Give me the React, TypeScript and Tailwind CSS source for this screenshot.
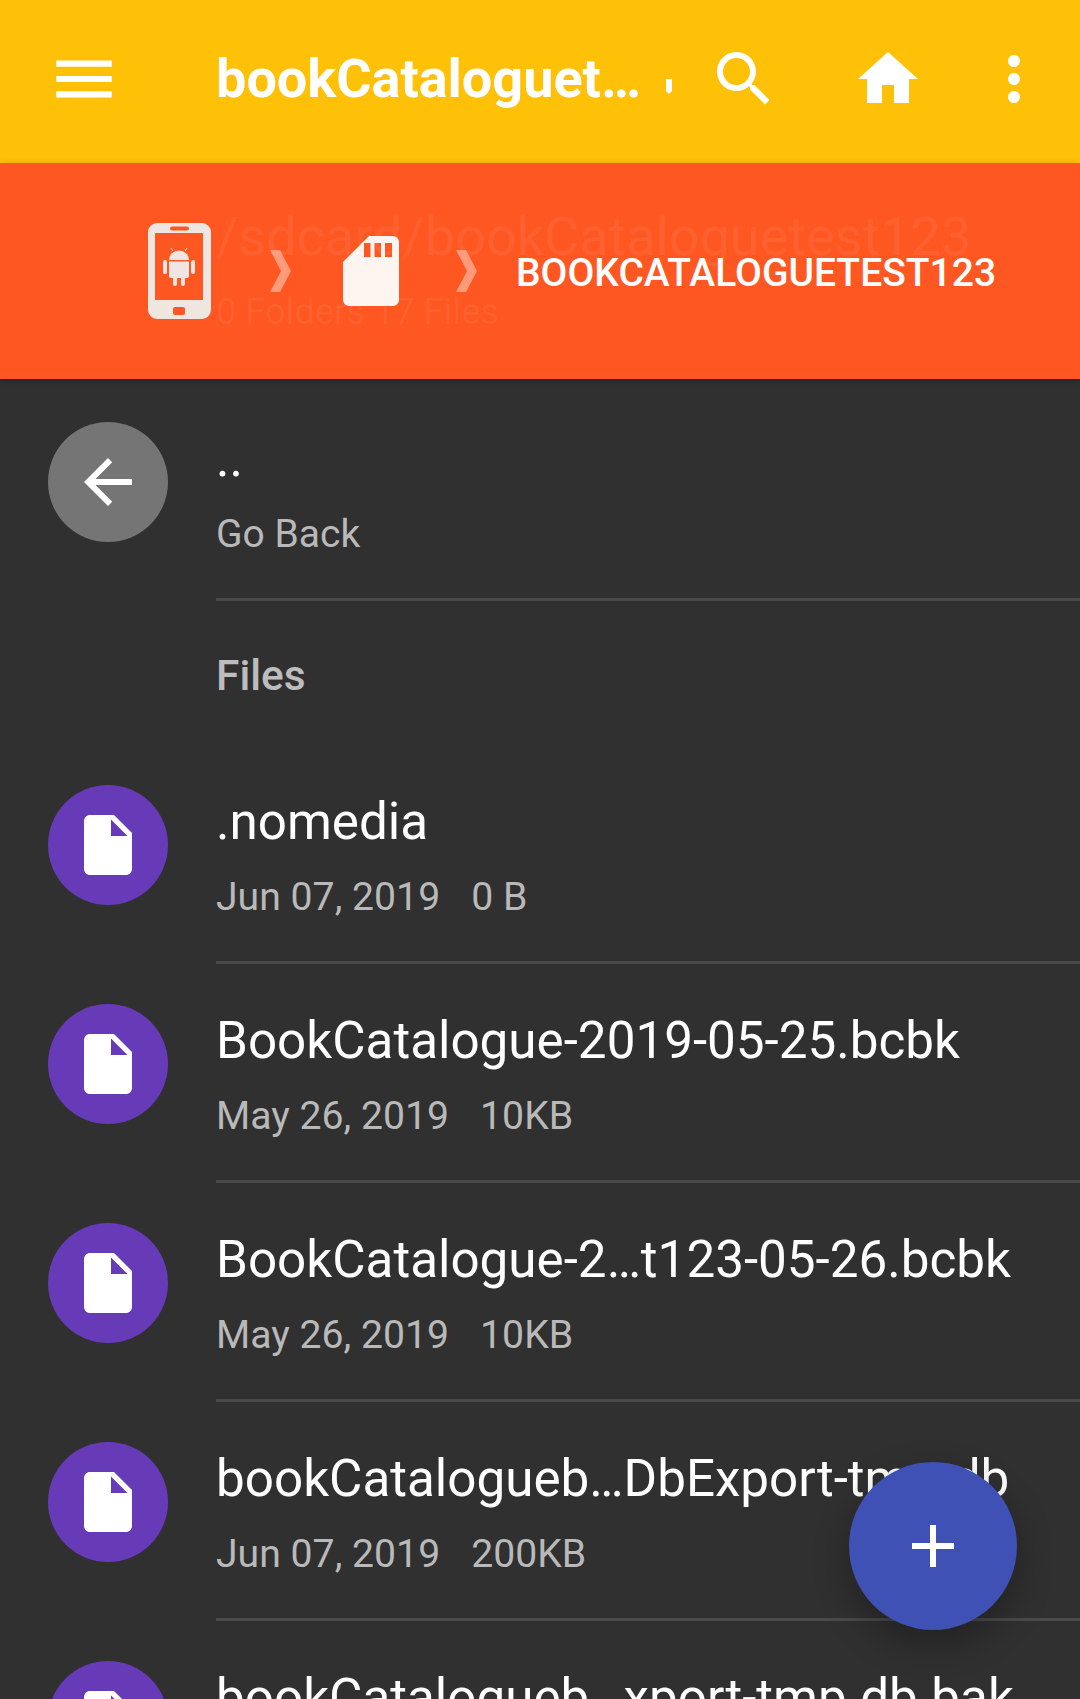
const files = [
  { name: '.nomedia', date: 'Jun 07, 2019', size: '0 B' },
  { name: 'BookCatalogue-2019-05-25.bcbk', date: 'May 26, 2019', size: '10KB' },
  { name: 'BookCatalogue-2…t123-05-26.bcbk', date: 'May 26, 2019', size: '10KB' },
  { name: 'bookCatalogueb…DbExport-tmp.db', date: 'Jun 07, 2019', size: '200KB' },
  { name: 'bookCatalogueb…xport-tmp.db.bak', date: 'Jun 07, 2019', size: '200KB' },
]

function Icon({ d, className }: { d: string; className: string }) {
  return (
    <svg viewBox="0 0 24 24" className={className} fill="currentColor">
      <path d={d} />
    </svg>
  )
}

function PhoneIcon() {
  return (
    <svg viewBox="0 0 63 96" className="w-[63px] h-[96px] shrink-0 text-[#efe6e2]" fill="currentColor">
      <path
        fillRule="evenodd"
        d="M9 0h45a9 9 0 0 1 9 9v78a9 9 0 0 1-9 9H9a9 9 0 0 1-9-9V9a9 9 0 0 1 9-9zM7 10v67h48V10H7zM24 3.500a2 2 0 0 0 0 4h15a2 2 0 0 0 0-4H24zM27 84a2 2 0 0 0-2 2v4a2 2 0 0 0 2 2h8a2 2 0 0 0 2-2v-4a2 2 0 0 0-2-2h-8z"
      />
      <path d="M21 37a10 9.500 0 0 1 20 0zM21 38.500h20V53a2 2 0 0 1-2 2H23a2 2 0 0 1-2-2zM15 39a2 2 0 0 1 4 0v10a2 2 0 0 1-4 0zM43 39a2 2 0 0 1 4 0v10a2 2 0 0 1-4 0zM25 55h4v6a2 2 0 0 1-4 0zM33 55h4v6a2 2 0 0 1-4 0z" />
      <path d="M25 28l-2-3M37 28l2-3" stroke="currentColor" strokeWidth="1" />
    </svg>
  )
}

function SdIcon() {
  return (
    <svg viewBox="0 0 56 70" className="w-[56px] h-[70px] shrink-0 text-[#fff5f0]" fill="currentColor">
      <path
        fillRule="evenodd"
        d="M26 0h24a6 6 0 0 1 6 6v58a6 6 0 0 1-6 6H6a6 6 0 0 1-6-6V26zM21 7v14h6.500V7zM31.500 7v14H38V7zM42 7v14h7V7z"
      />
    </svg>
  )
}

function Chevron() {
  return (
    <svg viewBox="0 0 21 42" className="w-[21px] h-[42px] shrink-0 text-white/40" fill="currentColor">
      <path d="M0 0h10l11 21-11 21H0l11-21z" />
    </svg>
  )
}

function RowText({ title, children }: { title: string; children: React.ReactNode }) {
  return (
    <div className="flex-1 min-w-0 border-b-[3px] border-[#4a4a4a]">
      <div className="text-[51.200px] leading-[60px] mt-[7px] text-white whitespace-nowrap">{title}</div>
      {children}
    </div>
  )
}

export default function App() {
  return (
    <div className="relative w-[1080px] h-[1699px] overflow-hidden bg-[#303030] font-['Roboto',sans-serif]">
      {/* Toolbar */}
      <div className="h-[163px] bg-[#ffc107] flex items-start pt-[43px] text-white">
        <Icon d="M3 18h18v-2H3v2zm0-5h18v-2H3v2zm0-7v2h18V6H3z" className="w-[74px] h-[74px] ml-[47px] -mt-[1px] shrink-0" />
        <div className="ml-[95px] w-[432px] shrink-0 text-[54px] leading-[72px] font-bold whitespace-nowrap">bookCataloguet…</div>
        <div className="w-[6px] h-[15px] mt-[36px] ml-[18px] shrink-0 bg-white [clip-path:polygon(0_0,100%_0,100%_80%,50%_100%,0_80%)]" />
        <Icon d="M15.500 14h-.79l-.28-.27C15.410 12.590 16 11.110 16 9.500 16 5.910 13.090 3 9.500 3S3 5.910 3 9.500 5.910 16 9.500 16c1.610 0 3.090-.59 4.230-1.570l.27.28v.79l5 4.990L20.490 19l-4.990-5zm-6 0C7.010 14 5 11.990 5 9.500S7.010 5 9.500 5 14 7.010 14 9.500 11.990 14 9.500 14z" className="w-[72px] h-[72px] ml-[36px] shrink-0" />
        <Icon d="M10 20v-6h4v6h5v-8h3L12 3 2 12h3v8z" className="w-[72px] h-[72px] ml-[72px] shrink-0" />
        <Icon d="M12 8c1.100 0 2-.9 2-2s-.9-2-2-2-2 .9-2 2 .9 2 2 2zm0 2c-1.100 0-2 .9-2 2s.9 2 2 2 2-.9 2-2-.9-2-2-2zm0 6c-1.100 0-2 .9-2 2s.9 2 2 2 2-.9 2-2-.9-2-2-2z" className="w-[72px] h-[72px] ml-[54px] shrink-0" />
      </div>

      {/* Path bar */}
      <div className="relative z-10 h-[216px] bg-[#ff5722] flex items-center pl-[148px] shadow-[0_2px_6px_rgba(0,0,0,0.25)]">
        <div className="absolute left-[216px] top-[42px] text-white/[0.06]">
          <div className="text-[54px] leading-[64px] whitespace-nowrap">/sdcard/bookCataloguetest123</div>
          <div className="text-[36.200px] leading-[44px] mt-[21px] whitespace-nowrap">0 Folders 17 Files</div>
        </div>
        <div className="relative flex items-center">
          <PhoneIcon />
          <div className="ml-[59px]"><Chevron /></div>
          <div className="ml-[52px]"><SdIcon /></div>
          <div className="ml-[57px]"><Chevron /></div>
          <div className="ml-[39px] mt-[4px] text-[39px] leading-[44px] font-medium text-white whitespace-nowrap">BOOKCATALOGUETEST123</div>
        </div>
      </div>

      {/* Go back */}
      <div className="flex pl-[48px] gap-[48px] pt-[43px]">
        <div className="w-[120px] h-[120px] rounded-full bg-[#757575] flex items-center justify-center shrink-0 text-white">
          <Icon d="M20 11H7.830l5.590-5.590L12 4l-8 8 8 8 1.410-1.410L7.830 13H20v-2z" className="w-[72px] h-[72px]" />
        </div>
        <RowText title="..">
          <div className="text-[39px] leading-[46px] mt-[22px] pb-[41px] text-[#b9b9b9]">Go Back</div>
        </RowText>
      </div>

      {/* Files header */}
      <div className="pl-[216px] pt-[52px] pb-[46px] text-[42.500px] leading-[46px] font-medium text-[#bdbdbd]">Files</div>

      {/* Files */}
      <div className="flex flex-col">
        {files.map(f => (
          <div key={f.name} className="flex pl-[48px] gap-[48px] pt-[40px]">
            <div className="w-[120px] h-[120px] rounded-full bg-[#673ab7] flex items-center justify-center shrink-0 text-white">
              <Icon d="M6 2c-1.100 0-1.990.9-1.990 2L4 20c0 1.100.89 2 1.990 2H18c1.100 0 2-.9 2-2V8l-6-6H6zm7 7V3.500L18.500 9H13z" className="w-[72px] h-[72px]" />
            </div>
            <RowText title={f.name}>
              <div className="flex gap-[31px] text-[39.200px] leading-[46px] mt-[22px] pb-[41px] text-[#b9b9b9]">
                <span>{f.date}</span>
                <span>{f.size}</span>
              </div>
            </RowText>
          </div>
        ))}
      </div>

      {/* FAB */}
      <button className="absolute left-[849px] top-[1462px] w-[168px] h-[168px] rounded-full bg-[#3f51b5] flex items-center justify-center text-white shadow-[0_14px_36px_rgba(0,0,0,0.3)]">
        <Icon d="M19 13h-6v6h-2v-6H5v-2h6V5h2v6h6v2z" className="w-[72px] h-[72px]" />
      </button>
    </div>
  )
}
